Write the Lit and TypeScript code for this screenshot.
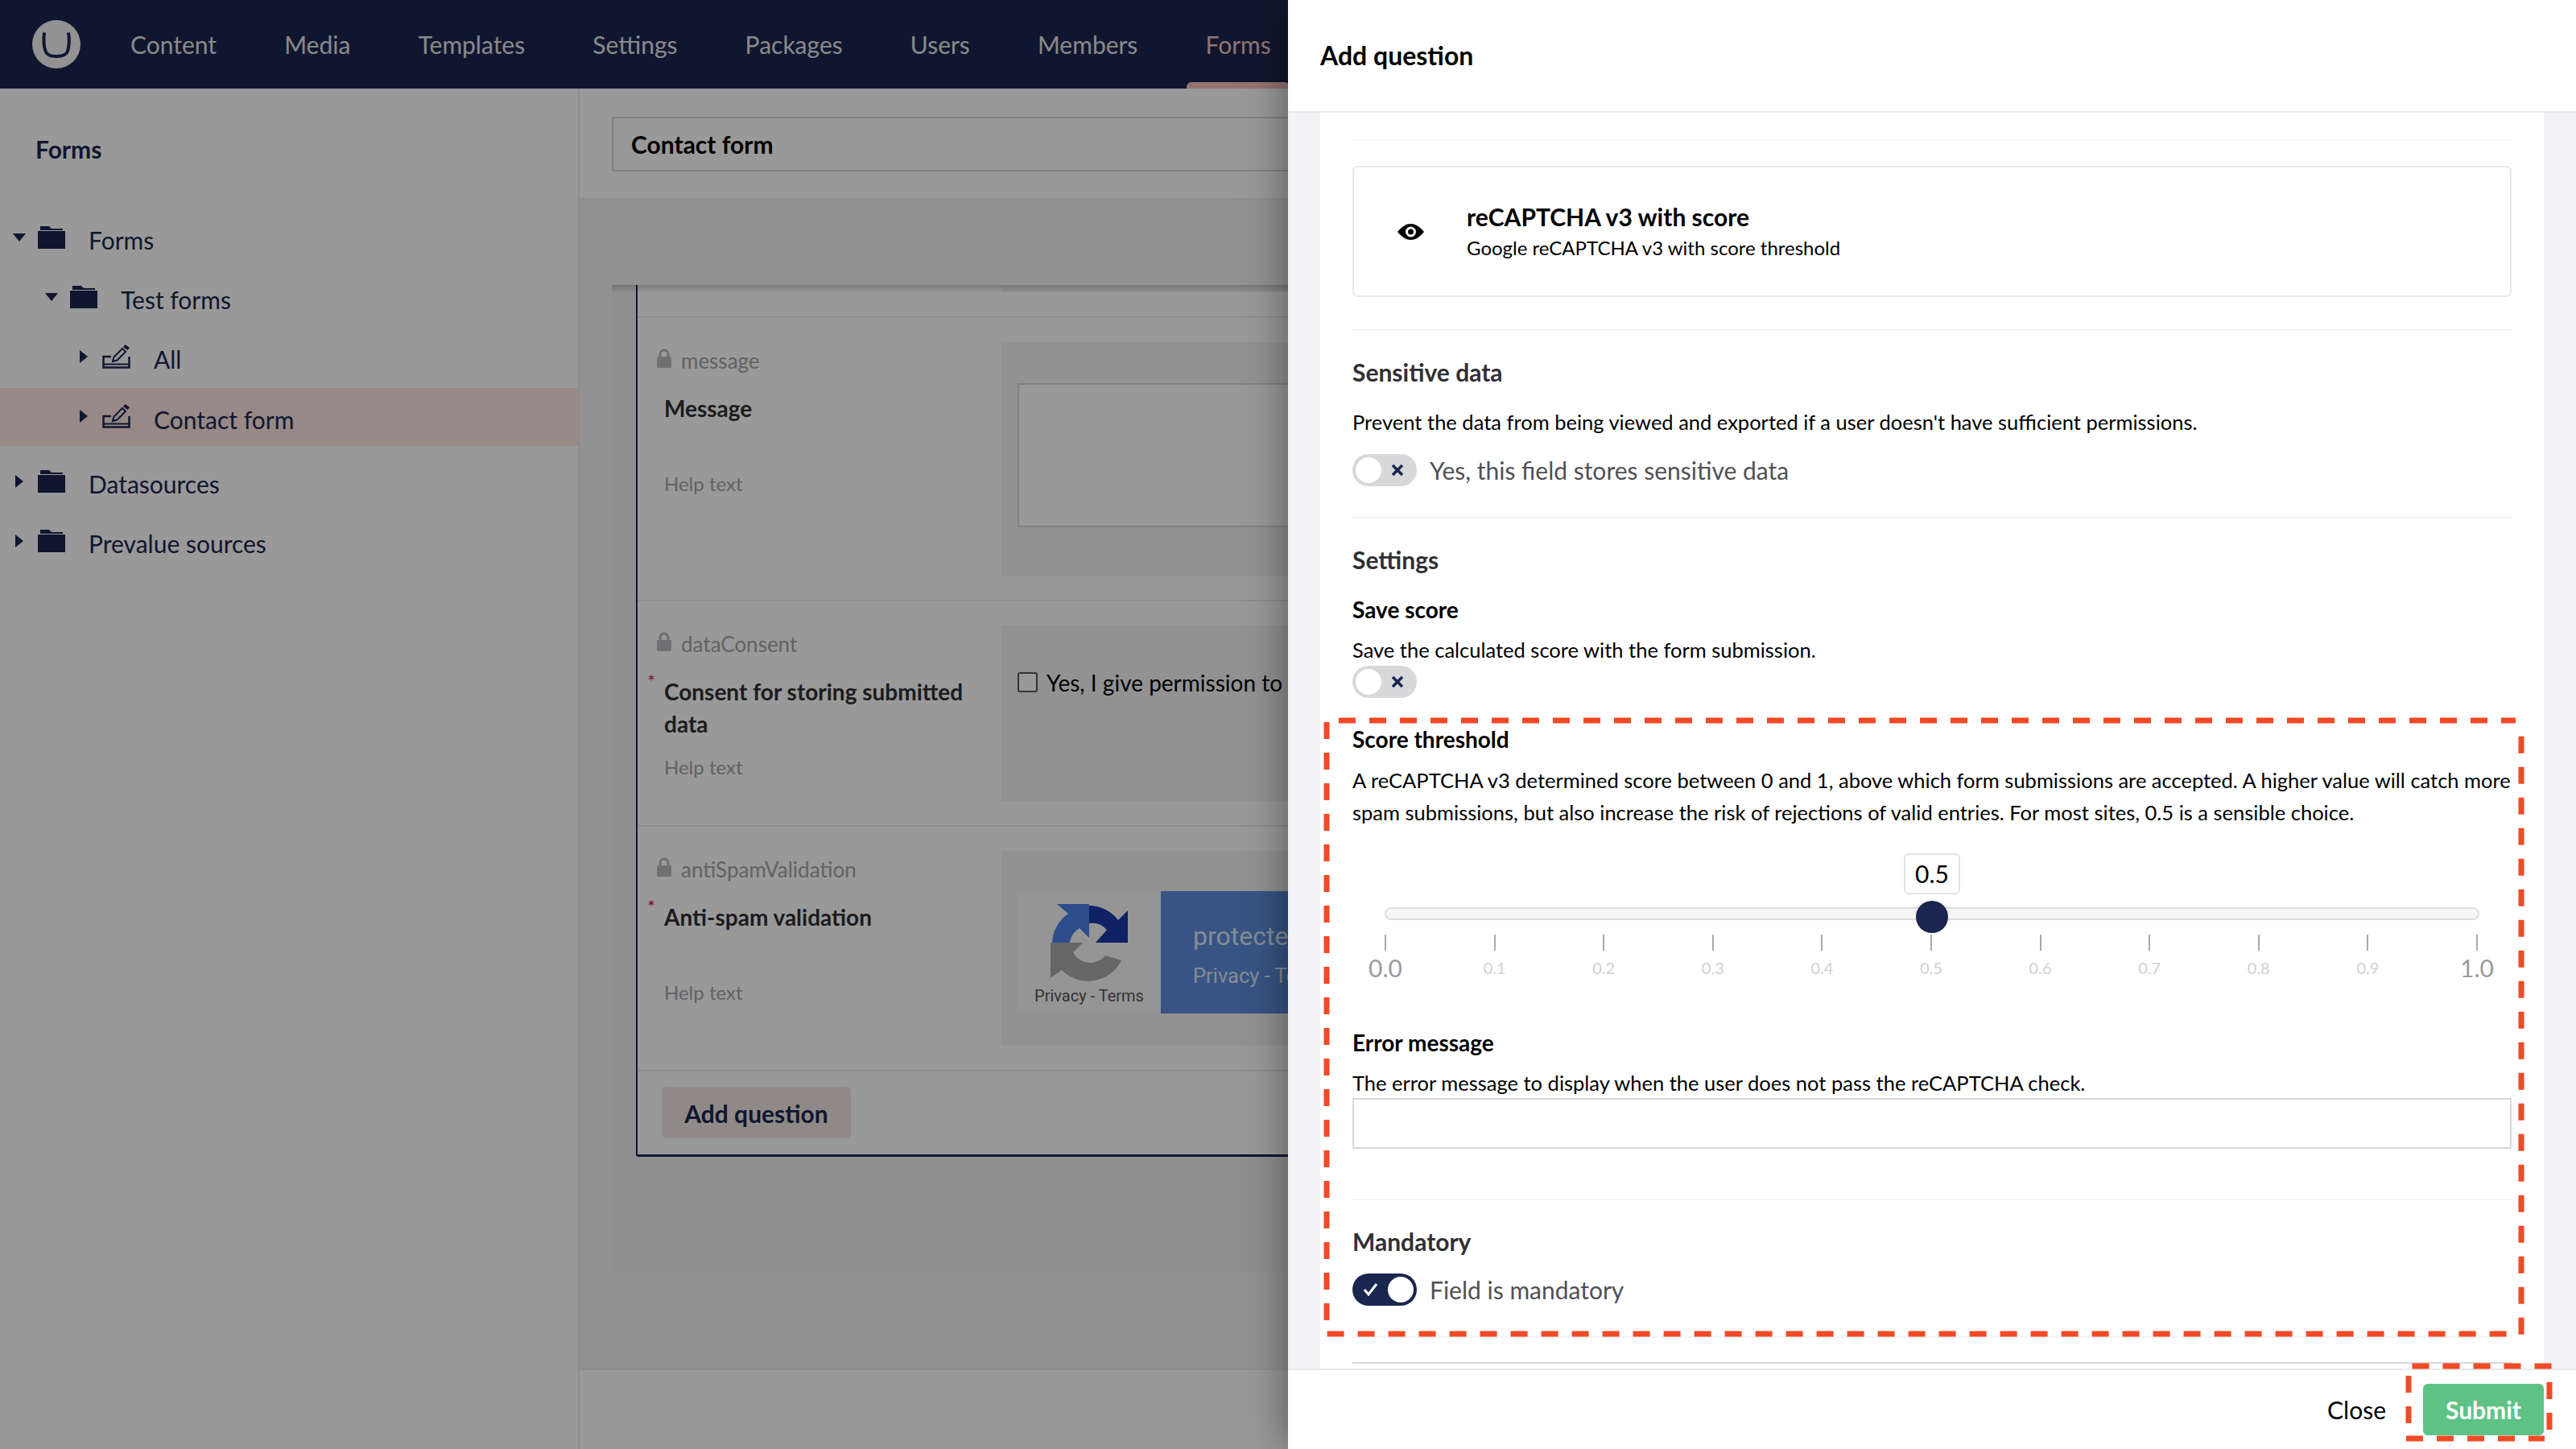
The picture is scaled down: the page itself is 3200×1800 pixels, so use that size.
import { LitElement, html, css, svg } from "lit";
import { customElement } from "lit/decorators.js";

const folder = html`<svg class="ico" width="34" height="28" viewBox="0 0 34 28"><path d="M3 0h11l3 3h14v2H3z"/><path d="M0 6h34v22H0z"/></svg>`;
const formIco = html`<svg class="ico" width="35" height="30" viewBox="0 0 35 30"><path d="M11 15H1.500v13.500h32V15" fill="none" stroke="currentColor" stroke-width="2.500"/><path d="M1.500 24.500h32" stroke="currentColor" stroke-width="2" fill="none"/><path d="M13 21l1.500-5.500L25 5l4 4L18.500 19.500z" fill="none" stroke="currentColor" stroke-width="2"/><path d="M28.500 0l5.500 4-2.500 3-5.500-4z"/></svg>`;
const lock = html`<svg class="lock" width="18" height="24" viewBox="0 0 18 24"><path d="M4 11V7a5 5 0 0 1 10 0v4" fill="none" stroke="currentColor" stroke-width="3"/><rect y="10" width="18" height="14" rx="1.500" fill="currentColor"/></svg>`;

function arrow(open: boolean) {
  return open
    ? html`<svg class="arr" width="16" height="10" viewBox="0 0 16 10"><path d="M0 0h16L8 10z"/></svg>`
    : html`<svg class="arr" width="10" height="16" viewBox="0 0 10 16"><path d="M0 0l10 8-10 8z"/></svg>`;
}

const nav = ["Content", "Media", "Templates", "Settings", "Packages", "Users", "Members", "Forms"];
const tree = [
  { t: "Forms", d: 0, open: true, ico: folder, cls: "" },
  { t: "Test forms", d: 1, open: true, ico: folder, cls: "" },
  { t: "All", d: 2, open: false, ico: formIco, cls: "" },
  { t: "Contact form", d: 2, open: false, ico: formIco, cls: "sel" },
  { t: "Datasources", d: 0, open: false, ico: folder, cls: "" },
  { t: "Prevalue sources", d: 0, open: false, ico: folder, cls: "" },
];
const ticks = ["0.0", "0.1", "0.2", "0.3", "0.4", "0.5", "0.6", "0.7", "0.8", "0.9", "1.0"];

function dash(x1: number, y1: number, x2: number, y2: number) {
  return svg`<line x1=${x1} y1=${y1} x2=${x2} y2=${y2} />`;
}

@customElement("app-root")
export class AppRoot extends LitElement {
  static styles = css`
    :host { display: block; width: 3200px; height: 1800px; position: relative; overflow: hidden; font-family: Lato, "Open Sans", sans-serif; color: #1b264f; background: #fff; }
    * { box-sizing: border-box; }
    .office { width: 3200px; height: 1800px; display: flex; flex-direction: column; }
    .nav { height: 110px; flex: none; background: #1b264f; display: flex; align-items: center; padding-left: 40px; position: relative; }
    .logo { width: 60px; height: 60px; flex: none; margin-right: 62px; display: block; }
    .navitems { display: flex; gap: 84.140px; }
    .navitem { font-size: 30px; line-height: 40px; color: #e4e4e8; white-space: nowrap; }
    .navitem.on { color: #f5c1bc; position: relative; }
    .navitem.on::after { content: ""; position: absolute; left: -23px; right: -23px; bottom: -35px; height: 8px; background: #f5c1bc; border-radius: 6px 6px 0 0; }
    .below { flex: 1; display: flex; min-height: 0; }
    .side { width: 720px; flex: none; border-right: 2px solid #e9e9eb; background: #fff; }
    .side h2 { margin: 0; padding: 55px 0 0 44px; font-size: 30px; line-height: 40px; font-weight: 700; color: #1b264f; }
    .tree { margin-top: 56px; }
    .row { height: 74px; display: flex; align-items: center; font-size: 30px; color: #1b264f; position: relative; }
    .row.sel { height: 72px; margin-top: -1px; margin-bottom: 10px; padding-top: 5px; background: #fbe4e0; }
    .arrbox { width: 16px; display: flex; justify-content: center; margin-right: 15px; margin-top: -6px; flex: none; }
    .row.sel .arrbox, .row.sel .ico { margin-top: -8px; }
    .arr { fill: #1b264f; display: block; }
    .ico { fill: #1b264f; color: #1b264f; flex: none; margin-top: -6px; display: block; }
    .lbl { margin-left: 29px; white-space: nowrap; }
    .main { flex: 1; min-width: 0; display: flex; flex-direction: column; background: #f3f3f5; overflow: hidden; }
    .top { height: 138px; flex: none; background: #fff; border-bottom: 2px solid #e9e9eb; padding: 35px 40px; }
    .title { width: 1400px; height: 68px; border: 2px solid #d8d7d9; padding: 0 22px; font-size: 30px; font-weight: 700; line-height: 64px; color: #000; }
    .content { flex: 1; min-height: 0; padding: 106px 40px 0; }
    .panel { height: 1226px; width: 1400px; background: #eee; padding-left: 30px; position: relative; }
    .panel::before { content: ""; position: absolute; left: 0; right: 0; top: 0; height: 10px; background: linear-gradient(rgba(0,0,0,.18), rgba(0,0,0,0)); }
    .card { background: #fff; border-left: 2px solid #1b264f; border-bottom: 3px solid #1b264f; border-radius: 0 0 0 3px; }
    .stub { height: 41px; border-bottom: 2px solid #e9e9eb; padding-left: 452px; }
    .stub i { display: block; height: 9px; background: #f3f3f5; }
    .qrow { display: flex; padding: 30px 0; border-bottom: 2px solid #e9e9eb; }
    .qleft { width: 452px; flex: none; padding: 5px 0 0 33px; }
    .alias { display: flex; align-items: center; gap: 12px; margin-left: -9px; font-size: 26px; line-height: 36px; color: #a3a3a7; white-space: nowrap; }
    .lock { color: #bbbabf; display: block; margin-top: -6px; }
    .qlabel { margin-top: 21px; min-height: 80px; font-size: 28px; line-height: 40px; font-weight: 700; color: #303033; position: relative; width: 390px; }
    .req { position: absolute; left: -21px; top: -8px; font-size: 24px; line-height: 30px; font-weight: 400; color: #d42054; }
    .help { margin-top: 14px; font-size: 24px; line-height: 40px; color: #a3a3a7; }
    .qbox { flex: 1; background: #f3f3f5; padding: 0 20px; overflow: hidden; }
    .ta { margin-top: 51px; margin-bottom: 60px; height: 179px; width: 700px; background: #fff; border: 2px solid #d8d7d9; }
    .chk { margin-top: 58px; height: 160px; display: flex; align-items: flex-start; gap: 11px; font-size: 28px; line-height: 26px; color: #000; white-space: nowrap; }
    .chk i { display: block; width: 25px; height: 25px; background: #fff; border: 2px solid #555; border-radius: 3px; flex: none; }
    .rc { margin-top: 50px; margin-bottom: 40px; height: 152px; width: 520px; display: flex; background: #fff; }
    .rcl { width: 178px; flex: none; background: #f9f9f9; display: flex; flex-direction: column; align-items: center; padding-top: 16px; }
    .rcl svg { display: block; }
    .rcl span { margin-top: 6px; font: 400 20px/24px Roboto, sans-serif; color: #555; white-space: nowrap; }
    .rcr { flex: 1; background: #5c8ddc; color: #fff; padding: 36px 0 0 40px; font-family: Roboto, sans-serif; white-space: nowrap; }
    .rcr b { display: block; font-weight: 400; font-size: 32px; line-height: 40px; opacity: .8; }
    .rcr span { display: block; margin-top: 14px; font-size: 25.500px; line-height: 30px; font-weight: 400; opacity: .8; }
    .addrow { padding: 19px 0 20px 30px; }
    .add { width: 235px; height: 64px; border-radius: 6px; background: #efe6e1; font-size: 30px; line-height: 66px; text-align: center; font-weight: 700; color: #1b264f; }
    .pfoot { height: 100px; flex: none; background: #fff; border-top: 2px solid #e9e9eb; }

    .scrim { position: absolute; inset: 0; background: rgba(0,0,0,.4); }
    .modal { position: absolute; left: 1600px; top: 0; width: 1600px; height: 1800px; display: flex; flex-direction: column; background: #f3f3f5; box-shadow: 0 0 50px rgba(0,0,0,.45); color: #000; }
    .mhead { height: 140px; flex: none; background: #fff; border-bottom: 2px solid #e9e9eb; padding: 0 40px; font-size: 32px; font-weight: 700; line-height: 138px; }
    .mbody { flex: 1; min-height: 0; overflow: hidden; padding: 0 40px; }
    .sheet { background: #fff; padding: 33px 40px 0; height: 1600px; }
    .hr { height: 2px; background: #f3f3f5; }
    .pick { margin-top: 31px; height: 163px; border: 2px solid #e9e9eb; border-radius: 6px; display: flex; align-items: center; padding-left: 54px; }
    .pick svg { display: block; flex: none; margin-right: 53px; }
    .pt { font-size: 30px; line-height: 40px; font-weight: 700; color: #000; }
    .ps { font-size: 24px; line-height: 38px; color: #000; }
    .h { font-size: 30px; line-height: 40px; font-weight: 700; color: #303033; }
    .s { font-size: 28px; line-height: 40px; font-weight: 700; color: #000; }
    .d { font-size: 25.500px; line-height: 40px; color: #000; }
    .tog { display: flex; align-items: center; gap: 16px; height: 40px; font-size: 30px; color: #515054; }
    .sw { width: 80px; height: 40px; border-radius: 20px; background: #d8d7d9; position: relative; flex: none; display: block; }
    .sw::after { content: ""; position: absolute; top: 4px; left: 4px; width: 32px; height: 32px; border-radius: 50%; background: #fff; }
    .sw svg { position: absolute; left: 48px; top: 12px; display: block; }
    .sw.on { background: #1b264f; }
    .sw.on::after { left: 44px; }
    .sw.on svg { left: 14px; top: 12px; }
    .mt10 { margin-top: 10px; } .mt11 { margin-top: 11px; } .mt21 { margin-top: 21px; } .mt22 { margin-top: 22px; }
    .mt31 { margin-top: 31px; } .mt30 { margin-top: 30px; } .mt20 { margin-top: 20px; } .mt40 { margin-top: 40px; } .mt39 { margin-top: 39px; } .mt38 { margin-top: 38px; }
    .mt0 { margin-top: 0; } .mt52 { margin-top: 52px; } .mt62 { margin-top: 62px; }
    .slider { margin-top: 31px; }
    .val { display: flex; justify-content: center; }
    .val span { width: 70px; height: 51px; border: 2px solid #e3e3e6; border-radius: 6px; font-size: 30px; line-height: 47px; text-align: center; color: #000; }
    .track { margin: 16px 40px 0 40px; height: 16px; border-radius: 8px; background: #f5f5f5; border: 2px solid #dedede; position: relative; }
    .thumb { position: absolute; left: 50%; top: -10px; margin-left: -20px; width: 40px; height: 40px; border-radius: 50%; background: #1b264f; }
    .ticks { margin: 18px 42px 0 40px; display: flex; justify-content: space-between; }
    .tk { width: 2px; display: flex; flex-direction: column; align-items: center; }
    .tk i { display: block; width: 2px; height: 20px; background: #a9a9ab; flex: none; }
    .tk span { height: 42px; line-height: 42px; font-size: 20px; color: #d0d0d2; white-space: nowrap; }
    .tk.big span { font-size: 30px; color: #9a9a9c; }
    .inp { margin-top: -1px; height: 63px; border: 2px solid #d8d7d9; background: #fff; }
    .cardtop { margin-top: 30px; height: 40px; border-top: 2px solid #d8d7d9; }
    .mfoot { height: 100px; flex: none; background: #fff; border-top: 2px solid #e9e9eb; display: flex; align-items: center; justify-content: flex-end; padding-right: 40px; }
    .close { font-size: 30px; color: #000; margin-right: 46px; }
    .submit { width: 150px; height: 64px; border-radius: 6px; background: #5fc285; color: #fff; font-size: 30px; font-weight: 700; line-height: 64px; text-align: center; }
    .marks { position: absolute; inset: 0; pointer-events: none; }
    .marks line { stroke: #f04a26; stroke-width: 7; stroke-dasharray: 21 17; }
  `;

  render() {
    return html`
      <div class="office">
        <div class="nav">
          <svg class="logo" viewBox="0 0 60 60">
            <circle cx="30" cy="30" r="30" fill="#f3f3f5"/>
            <path d="M15 15.500C14 24 14.500 33 16.500 38.500 18 43.500 23 45 30 45s12.500-1.500 14-6.500c1.500-5 2.500-14 1-23" fill="none" stroke="#1b264f" stroke-width="4"/>
          </svg>
          <div class="navitems">
            ${nav.map((n) => html`<div class="navitem ${n === "Forms" ? "on" : ""}">${n}</div>`)}
          </div>
        </div>
        <div class="below">
          <div class="side">
            <h2>Forms</h2>
            <div class="tree">
              ${tree.map((r) => html`
                <div class="row ${r.cls}" style="padding-left:${16 + r.d * 40}px">
                  <span class="arrbox">${arrow(r.open)}</span>
                  ${r.ico}
                  <span class="lbl">${r.t}</span>
                </div>`)}
            </div>
          </div>
          <div class="main">
            <div class="top"><div class="title">Contact form</div></div>
            <div class="content">
              <div class="panel">
                <div class="card">
                  <div class="stub"><i></i></div>
                  <div class="qrow">
                    <div class="qleft">
                      <div class="alias">${lock}message</div>
                      <div class="qlabel">Message</div>
                      <div class="help">Help text</div>
                    </div>
                    <div class="qbox"><div class="ta"></div></div>
                  </div>
                  <div class="qrow">
                    <div class="qleft">
                      <div class="alias">${lock}dataConsent</div>
                      <div class="qlabel"><span class="req">*</span>Consent for storing submitted data</div>
                      <div class="help">Help text</div>
                    </div>
                    <div class="qbox"><div class="chk"><i></i>Yes, I give permission to</div></div>
                  </div>
                  <div class="qrow">
                    <div class="qleft">
                      <div class="alias">${lock}antiSpamValidation</div>
                      <div class="qlabel"><span class="req">*</span>Anti-spam validation</div>
                      <div class="help">Help text</div>
                    </div>
                    <div class="qbox">
                      <div class="rc">
                        <div class="rcl">
                          <svg width="96" height="96" viewBox="0 0 96 96">
                            <path d="M48 2A46 46 0 0 1 84 20L96 8V48H56L70 32A24 24 0 0 0 48 24Z" fill="#1c3aa9"/>
                            <path d="M2 48A46 46 0 0 1 22 12L8 0H48V42L36 30A24 24 0 0 0 24 48Z" fill="#4a7fe8"/>
                            <path d="M0 48H40L28 60A24 24 0 0 0 68 64L88 70A46 46 0 0 1 14 82L0 92Z" fill="#ababab"/>
                          </svg>
                          <span>Privacy - Terms</span>
                        </div>
                        <div class="rcr"><b>protected by reCAPTCHA</b><span>Privacy - Terms</span></div>
                      </div>
                    </div>
                  </div>
                  <div class="addrow"><div class="add">Add question</div></div>
                </div>
              </div>
            </div>
            <div class="pfoot"></div>
          </div>
        </div>
      </div>
      <div class="scrim"></div>
      <div class="modal">
        <div class="mhead">Add question</div>
        <div class="mbody">
          <div class="sheet">
            <div class="hr"></div>
            <div class="pick">
              <svg width="33" height="20" viewBox="0 0 33 20">
                <path d="M0 10C6 3 11 0 16.500 0S27 3 33 10C27 17 22 20 16.500 20S6 17 0 10Z" fill="#000"/>
                <circle cx="16.500" cy="10" r="6.500" fill="#fff"/><circle cx="16.500" cy="10" r="3.500" fill="#000"/>
              </svg>
              <div><div class="pt">reCAPTCHA v3 with score</div><div class="ps">Google reCAPTCHA v3 with score threshold</div></div>
            </div>
            <div class="hr mt40"></div>
            <div class="h mt31">Sensitive data</div>
            <div class="d mt22">Prevent the data from being viewed and exported if a user doesn't have sufficient permissions.</div>
            <div class="tog mt20">${this.sw(false)}Yes, this field stores sensitive data</div>
            <div class="hr mt38"></div>
            <div class="h mt31">Settings</div>
            <div class="s mt22">Save score</div>
            <div class="d mt10">Save the calculated score with the form submission.</div>
            <div class="tog mt0">${this.sw(false)}</div>
            <div class="s mt31">Score threshold</div>
            <div class="d mt11">A reCAPTCHA v3 determined score between 0 and 1, above which form submissions are accepted. A higher value will catch more spam submissions, but also increase the risk of rejections of valid entries. For most sites, 0.5 is a sensible choice.</div>
            <div class="slider">
              <div class="val"><span>0.5</span></div>
              <div class="track"><div class="thumb"></div></div>
              <div class="ticks">
                ${ticks.map((t, i) => html`<div class="tk ${i === 0 || i === 10 ? "big" : ""}"><i></i><span>${t}</span></div>`)}
              </div>
            </div>
            <div class="s mt52">Error message</div>
            <div class="d mt10">The error message to display when the user does not pass the reCAPTCHA check.</div>
            <div class="inp"></div>
            <div class="hr mt62"></div>
            <div class="h mt31">Mandatory</div>
            <div class="tog mt20">${this.sw(true)}Field is mandatory</div>
            <div class="hr mt38"></div>
            <div class="cardtop"></div>
          </div>
        </div>
        <div class="mfoot"><div class="close">Close</div><div class="submit">Submit</div></div>
      </div>
      <svg class="marks" width="3200" height="1800" viewBox="0 0 3200 1800">
        ${dash(1663, 895, 3125, 895)}
        ${dash(3132, 1657.7, 3132, 900)}
        ${dash(3113.6, 1657, 1644, 1657)}
        ${dash(1648, 897, 1648, 1642)}
        ${dash(2996.500, 1697, 3170, 1697)}
        ${dash(2992, 1709, 2992, 1770)}
        ${dash(3167, 1717, 3167, 1776)}
        ${dash(2989, 1787, 3161, 1787)}
      </svg>
    `;
  }

  sw(on: boolean) {
    return html`<span class="sw ${on ? "on" : ""}">
      ${on
        ? html`<svg width="18" height="16" viewBox="0 0 18 16"><path d="M1 8l5 6L16 1" fill="none" stroke="#fff" stroke-width="3"/></svg>`
        : html`<svg width="16" height="16" viewBox="0 0 16 16"><path d="M2 2l12 12M14 2L2 14" fill="none" stroke="#1b264f" stroke-width="3.500"/></svg>`}
    </span>`;
  }
}
